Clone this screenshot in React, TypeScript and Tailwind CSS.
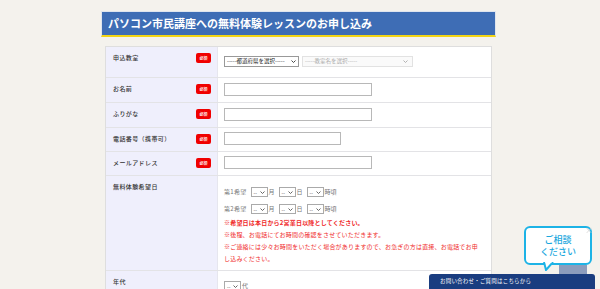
import type { ReactNode } from "react";

const font = { fontFamily: '"Noto Sans CJK JP", "Noto Sans", sans-serif' };

function Chevron({ color = "#555" }: { color?: string }) {
  return (
    <svg width="5" height="3" viewBox="0 0 5 3" className="shrink-0">
      <path d="M0.5 0.5 L2.5 2.5 L4.5 0.5" fill="none" stroke={color} strokeWidth="0.9" />
    </svg>
  );
}

function Badge() {
  return (
    <span className="mt-[6px] flex h-[10px] w-[15px] items-center justify-center rounded-[2px] bg-[#f00000] text-[4px] font-bold leading-none text-white">
      必須
    </span>
  );
}

function MiniSelect() {
  return (
    <span className="flex h-[10px] w-[17px] items-center justify-between border border-[#aaa] bg-white px-[2px] text-[5px] leading-none text-[#333]">
      --
      <Chevron />
    </span>
  );
}

function Row({
  label,
  required,
  height,
  children,
  valueClass = "pt-[5px]",
}: {
  label: string;
  required?: boolean;
  height: string;
  children?: ReactNode;
  valueClass?: string;
}) {
  return (
    <div className={`flex border-b border-[#e3e3e6] ${height}`}>
      <div className="flex w-[112px] shrink-0 items-start justify-between border-r border-[#e6e6ee] bg-[#efeffc] pl-[7px] pr-[6px]">
        <span className="pt-[6px] text-[6px] font-medium leading-[10px] tracking-[0.4px] text-[#333]">{label}</span>
        {required && <Badge />}
      </div>
      <div className={`flex-1 bg-white pl-[6px] pr-[10px] ${valueClass}`}>{children}</div>
    </div>
  );
}

function TextInput({ width }: { width: string }) {
  return <div className={`h-[13px] border border-[#b8b8b8] bg-white ${width}`} />;
}

function DateLine({ label }: { label: string }) {
  return (
    <div className="flex h-[10px] items-center text-[6px] leading-none text-[#777]">
      <span className="mr-[4px] tracking-[0.3px]">{label}</span>
      <MiniSelect />
      <span className="ml-[1px] mr-[4px]">月</span>
      <MiniSelect />
      <span className="ml-[1px] mr-[4px]">日</span>
      <MiniSelect />
      <span className="ml-[1px]">時頃</span>
    </div>
  );
}

export default function App() {
  return (
    <div className="relative min-h-[289px] overflow-hidden bg-[#f4f2ed]" style={font}>
      <div className="ml-[101px] w-[395px] pt-[11px] pb-[40px]">
        <div className="flex h-[26px] items-center border border-[#dfe5ee] border-b-2 border-b-[#f3d515] bg-[#3e6db5] pl-[6px]">
          <h1 className="text-[11px] font-bold text-white">
            パソコン市民講座への無料体験レッスンのお申し込み
          </h1>
        </div>

        <div className="mx-[4px] mt-[9px] border border-b-0 border-[#dedede]">
          <Row label="申込教室" required height="h-[31px]" valueClass="pt-[9px]">
            <div className="flex gap-[3px]">
              <span className="flex h-[11px] w-[75px] items-center justify-between border border-[#999] bg-white px-[2px] text-[5.5px] leading-none text-[#222]">
                -----都道府県を選択-----
                <Chevron color="#333" />
              </span>
              <span className="flex h-[11px] w-[111px] items-center justify-between border border-[#e2e2e2] bg-[#fafafa] px-[2px] pr-[4px] text-[5.5px] leading-none text-[#aaa]">
                -----教室名を選択-----
                <Chevron color="#aaa" />
              </span>
            </div>
          </Row>
          <Row label="お名前" required height="h-[25px]">
            <TextInput width="w-[148px]" />
          </Row>
          <Row label="ふりがな" required height="h-[25px]">
            <TextInput width="w-[148px]" />
          </Row>
          <Row label="電話番号（携帯可）" required height="h-[24px]" valueClass="pt-[4px]">
            <TextInput width="w-[117px]" />
          </Row>
          <Row label="メールアドレス" required height="h-[24px]" valueClass="pt-[4px]">
            <TextInput width="w-[148px]" />
          </Row>
          <Row label="無料体験希望日" height="h-[95px]" valueClass="pt-[11px]">
            <DateLine label="第1希望" />
            <div className="mt-[7px]">
              <DateLine label="第2希望" />
            </div>
            <div className="mt-[3px] text-[6px] leading-[12px] tracking-[0.2px] text-[#f02a2a]">
              <p className="font-bold">※希望日は本日から2営業日以降としてください。</p>
              <p>※後程、お電話にてお時間の確認をさせていただきます。</p>
              <p>※ご連絡には少々お時間をいただく場合がありますので、お急ぎの方は直接、お電話でお申し込みください。</p>
            </div>
          </Row>
          <Row label="年代" height="h-[30px]" valueClass="pt-[10px]">
            <div className="flex items-center text-[6px] leading-none text-[#777]">
              <MiniSelect />
              <span className="ml-[1px]">代</span>
            </div>
          </Row>
        </div>
      </div>

      {/* floating consult bubble */}
      <div className="fixed bottom-[15px] right-[13px] h-[9px] w-[28px] bg-[#8c9dbd]" />
      <div className="fixed bottom-[24px] right-[8px] flex h-[39px] w-[68px] items-center justify-center rounded-[6px] border-2 border-[#1db3e6] bg-white pt-[1px]">
        <p className="text-center text-[9px] font-medium leading-[12px] text-[#1aa8de]">
          ご相談
          <br />
          ください
        </p>
        <svg width="12" height="9" viewBox="0 0 12 9" className="absolute bottom-[-8px] left-[17px]">
          <path d="M1 0 L3 8 L10 0" fill="#fff" stroke="#1db3e6" strokeWidth="2" />
          <rect x="2" y="-2" width="7" height="2.5" fill="#fff" />
        </svg>
        <span className="absolute right-[-3px] top-[-2px] text-[8px] leading-none text-[#cfcfcf]">×</span>
      </div>
      <div className="fixed bottom-0 right-[5px] flex h-[15px] w-[166px] items-center rounded-t-[3px] bg-[#1a3d80] pl-[11px]">
        <span className="text-[5.5px] leading-none tracking-[0.2px] text-white">お問い合わせ・ご質問はこちらから</span>
      </div>
    </div>
  );
}
